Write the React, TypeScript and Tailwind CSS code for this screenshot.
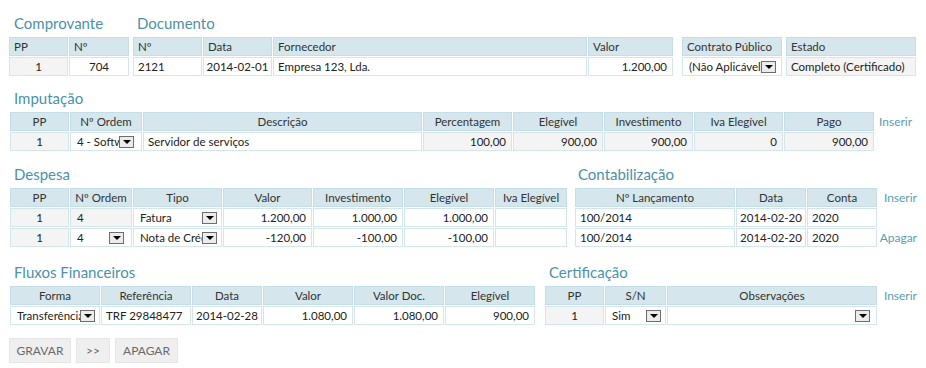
import React from "react";

type Align = "l" | "c" | "r";

const alignCls = (a: Align) =>
  a === "l" ? "justify-start pl-[4px]" : a === "r" ? "justify-end pr-[5px]" : "justify-center";

function H({ w, a = "c", children }: { w: string; a?: Align; children?: React.ReactNode }) {
  return (
    <div
      className={`${w} h-[19px] shrink-0 border border-[#c3dee8] bg-[#d5e6ec] text-[#333] flex items-center whitespace-nowrap overflow-hidden ${alignCls(a)}`}
    >
      {children}
    </div>
  );
}

function D({
  w,
  a = "l",
  g = false,
  children,
}: {
  w: string;
  a?: Align;
  g?: boolean;
  children?: React.ReactNode;
}) {
  return (
    <div
      className={`${w} h-[19px] shrink-0 border border-[#d3e6ec] ${g ? "bg-[#f4f4f4]" : "bg-white"} flex items-center whitespace-nowrap overflow-hidden ${alignCls(a)}`}
    >
      {children}
    </div>
  );
}

function Arrow({ mr = "mr-[5px]" }: { mr?: string }) {
  return (
    <span
      className={`w-[15px] h-[12px] shrink-0 border border-[#6d6d6d] bg-[#ececec] flex items-center justify-center ${mr}`}
    >
      <span className="w-0 h-0 border-x-[4px] border-x-transparent border-t-[4px] border-t-black" />
    </span>
  );
}

function S({ w, text, mr }: { w: string; text?: string; mr?: string }) {
  return (
    <div
      className={`${w} h-[19px] shrink-0 border border-[#d3e6ec] bg-white flex items-center pl-[6px] overflow-hidden`}
    >
      <span className="flex-1 overflow-hidden whitespace-nowrap">{text}</span>
      <Arrow mr={mr} />
    </div>
  );
}

function Heading({ children, pl = "pl-[4px]" }: { children: React.ReactNode; pl?: string }) {
  return (
    <div className={`h-[20px] leading-[20px] mb-[4px] text-[15px] text-[#4b92a8] whitespace-nowrap ${pl}`}>
      {children}
    </div>
  );
}

function Row({ children }: { children: React.ReactNode }) {
  return <div className="flex gap-px">{children}</div>;
}

function Tbl({ children }: { children: React.ReactNode }) {
  return <div className="flex flex-col gap-px">{children}</div>;
}

function Link({ children }: { children: React.ReactNode }) {
  return <span className="text-[12px] text-[#5a9db2]">{children}</span>;
}

export default function App() {
  return (
    <div className="w-[926px] h-[368px] bg-white pt-[13px] font-['Lato',sans-serif] text-[11.5px] text-[#222] overflow-hidden">
      {/* Row 1 */}
      <div className="flex items-start pl-[9px]">
        <div>
          <Heading pl="pl-[5px]">Comprovante</Heading>
          <Tbl>
            <Row>
              <H w="w-[59px]" a="l">PP</H>
              <H w="w-[60px]" a="l">Nº</H>
            </Row>
            <Row>
              <D w="w-[59px]" a="c" g>1</D>
              <D w="w-[60px]" a="c">704</D>
            </Row>
          </Tbl>
        </div>
        <div className="ml-[4px]">
          <Heading>Documento</Heading>
          <Tbl>
            <Row>
              <H w="w-[69px]" a="l">Nº</H>
              <H w="w-[69px]" a="l">Data</H>
              <H w="w-[314px]" a="l">Fornecedor</H>
              <H w="w-[85px]" a="l">Valor</H>
            </Row>
            <Row>
              <D w="w-[69px]">2121</D>
              <D w="w-[69px]" a="c">2014-02-01</D>
              <D w="w-[314px]">Empresa 123, Lda.</D>
              <D w="w-[85px]" a="r">1.200,00</D>
            </Row>
          </Tbl>
        </div>
        <div className="ml-[9px] mt-[24px]">
          <Tbl>
            <Row>
              <H w="w-[100px]" a="l">Contrato Público</H>
            </Row>
            <Row>
              <S w="w-[100px]" text="(Não Aplicável)" />
            </Row>
          </Tbl>
        </div>
        <div className="ml-[4px] mt-[24px]">
          <Tbl>
            <Row>
              <H w="w-[130px]" a="l">Estado</H>
            </Row>
            <Row>
              <D w="w-[130px]" g>Completo (Certificado)</D>
            </Row>
          </Tbl>
        </div>
      </div>

      {/* Row 2 */}
      <div className="mt-[12px] pl-[10px]">
        <Heading>Imputação</Heading>
        <div className="flex items-start">
          <Tbl>
            <Row>
              <H w="w-[59px]">PP</H>
              <H w="w-[72px]">Nº Ordem</H>
              <H w="w-[279px]">Descrição</H>
              <H w="w-[89px]">Percentagem</H>
              <H w="w-[90px]">Elegível</H>
              <H w="w-[89px]">Investimento</H>
              <H w="w-[89px]">Iva Elegível</H>
              <H w="w-[90px]">Pago</H>
            </Row>
            <Row>
              <D w="w-[59px]" a="c" g>1</D>
              <S w="w-[72px]" text="4 - Software" mr="mr-[7px]" />
              <D w="w-[279px]">Servidor de serviços</D>
              <D w="w-[89px]" a="r" g>100,00</D>
              <D w="w-[90px]" a="r" g>900,00</D>
              <D w="w-[89px]" a="r" g>900,00</D>
              <D w="w-[89px]" a="r" g>0</D>
              <D w="w-[90px]" a="r" g>900,00</D>
            </Row>
          </Tbl>
          <div className="h-[19px] flex items-center ml-[5px]">
            <Link>Inserir</Link>
          </div>
        </div>
      </div>

      {/* Row 3 */}
      <div className="mt-[13px] pl-[10px] flex items-start">
        <div>
          <Heading>Despesa</Heading>
          <Tbl>
            <Row>
              <H w="w-[59px]">PP</H>
              <H w="w-[62px]">Nº Ordem</H>
              <H w="w-[89px]">Tipo</H>
              <H w="w-[89px]">Valor</H>
              <H w="w-[90px]">Investimento</H>
              <H w="w-[90px]">Elegível</H>
              <H w="w-[72px]">Iva Elegível</H>
            </Row>
            <Row>
              <D w="w-[59px]" a="c" g>1</D>
              <D w="w-[62px]" g>
                <span className="pl-[2px]">4</span>
              </D>
              <S w="w-[89px]" text="Fatura" mr="mr-[4px]" />
              <D w="w-[89px]" a="r">1.200,00</D>
              <D w="w-[90px]" a="r">1.000,00</D>
              <D w="w-[90px]" a="r">1.000,00</D>
              <D w="w-[72px]" />
            </Row>
            <Row>
              <D w="w-[59px]" a="c" g>1</D>
              <S w="w-[62px]" text="4" mr="mr-[7px]" />
              <S w="w-[89px]" text="Nota de Crédito" mr="mr-[4px]" />
              <D w="w-[89px]" a="r">-120,00</D>
              <D w="w-[90px]" a="r">-100,00</D>
              <D w="w-[90px]" a="r">-100,00</D>
              <D w="w-[72px]" />
            </Row>
          </Tbl>
        </div>
        <div className="ml-[8px]">
          <Heading pl="pl-[3px]">Contabilização</Heading>
          <div className="flex items-start">
            <Tbl>
              <Row>
                <H w="w-[160px]">Nº Lançamento</H>
                <H w="w-[70px]">Data</H>
                <H w="w-[70px]">Conta</H>
              </Row>
              <Row>
                <D w="w-[160px]">100/2014</D>
                <D w="w-[70px]" a="c">2014-02-20</D>
                <D w="w-[70px]">2020</D>
              </Row>
              <Row>
                <D w="w-[160px]">100/2014</D>
                <D w="w-[70px]" a="c">2014-02-20</D>
                <D w="w-[70px]">2020</D>
              </Row>
            </Tbl>
            <div className="w-[40px] flex flex-col gap-px">
              <div className="h-[19px] flex items-center justify-end">
                <Link>Inserir</Link>
              </div>
              <div className="h-[19px]" />
              <div className="h-[19px] flex items-center justify-end">
                <Link>Apagar</Link>
              </div>
            </div>
          </div>
        </div>
      </div>

      {/* Row 4 */}
      <div className="mt-[15px] pl-[10px] flex items-start">
        <div>
          <Heading>Fluxos Financeiros</Heading>
          <Tbl>
            <Row>
              <H w="w-[90px]">Forma</H>
              <H w="w-[90px]">Referência</H>
              <H w="w-[70px]">Data</H>
              <H w="w-[90px]">Valor</H>
              <H w="w-[90px]">Valor Doc.</H>
              <H w="w-[90px]">Elegível</H>
            </Row>
            <Row>
              <S w="w-[90px]" text="Transferência" mr="mr-[4px]" />
              <D w="w-[90px]">TRF 29848477</D>
              <D w="w-[70px]" a="c">2014-02-28</D>
              <D w="w-[90px]" a="r">1.080,00</D>
              <D w="w-[90px]" a="r">1.080,00</D>
              <D w="w-[90px]" a="r">900,00</D>
            </Row>
          </Tbl>
        </div>
        <div className="ml-[10px]">
          <Heading>Certificação</Heading>
          <div className="flex items-start">
            <Tbl>
              <Row>
                <H w="w-[59px]">PP</H>
                <H w="w-[61px]">S/N</H>
                <H w="w-[210px]">Observações</H>
              </Row>
              <Row>
                <D w="w-[59px]" a="c" g>1</D>
                <S w="w-[61px]" text="Sim" mr="mr-[4px]" />
                <S w="w-[210px]" text="" mr="mr-[6px]" />
              </Row>
            </Tbl>
            <div className="w-[40px] h-[19px] flex items-center justify-end">
              <Link>Inserir</Link>
            </div>
          </div>
        </div>
      </div>

      {/* Buttons */}
      <div className="mt-[13px] pl-[9px] flex gap-[5px]">
        <button className="w-[62px] h-[25px] bg-[#efefef] border border-[#e6e6e6] text-[#6a6a6a] text-[12px]">
          GRAVAR
        </button>
        <button className="w-[34px] h-[25px] bg-[#efefef] border border-[#e6e6e6] text-[#6a6a6a] text-[12px]">
          &gt;&gt;
        </button>
        <button className="w-[63px] h-[25px] bg-[#efefef] border border-[#e6e6e6] text-[#6a6a6a] text-[12px]">
          APAGAR
        </button>
      </div>
    </div>
  );
}
